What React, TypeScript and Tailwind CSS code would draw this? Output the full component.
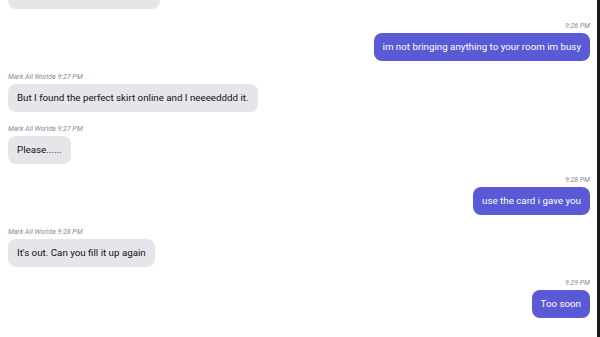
const messages = [
  { id: 0, mine: false, meta: "Mark All Worlda 9:25 PM", text: "Can you bring me a charger pls" },
  { id: 1, mine: true, meta: "9:26 PM", text: "im not bringing anything to your room im busy" },
  { id: 2, mine: false, meta: "Mark All Worlda 9:27 PM", text: "But I found the perfect skirt online and I neeeedddd it." },
  { id: 3, mine: false, meta: "Mark All Worlda 9:27 PM", text: "Please......" },
  { id: 4, mine: true, meta: "9:28 PM", text: "use the card i gave you" },
  { id: 5, mine: false, meta: "Mark All Worlda 9:28 PM", text: "It's out. Can you fill it up again" },
  { id: 6, mine: true, meta: "9:29 PM", text: "Too soon" },
];

export default function App() {
  return (
    <div
      className="h-[337px] w-[600px] overflow-hidden bg-white border-r-[3px] border-[#1a1a1a]"
      style={{ fontFamily: "Roboto, 'Noto Sans', sans-serif" }}
    >
      <div className="-mt-[30px] flex flex-col gap-[12.5px] pl-2 pr-[7px]">
        {messages.map((m) => (
          <div key={m.id} className={`flex flex-col ${m.mine ? "items-end" : "items-start"}`}>
            <div className="mb-[2px] h-[9px] text-[7px] italic leading-[9px] text-[#8a8a8f]">{m.meta}</div>
            <div
              className={`rounded-lg px-[9px] py-[7px] text-[9.75px] leading-[14px] whitespace-nowrap ${
                m.mine ? "bg-[#5a5ad6] text-white" : "bg-[#e5e5ea] text-[#111]"
              }`}
            >
              {m.text}
            </div>
          </div>
        ))}
      </div>
    </div>
  );
}
